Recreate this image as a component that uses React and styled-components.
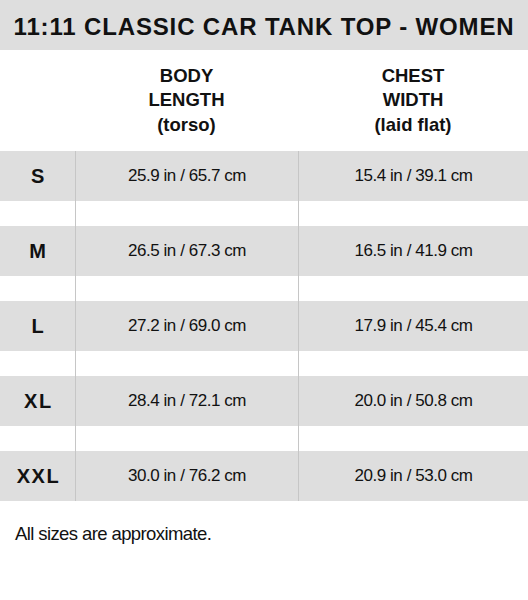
import React from "react";
import styled, { createGlobalStyle } from "styled-components";

const Global = createGlobalStyle`
  html, body { margin: 0; padding: 0; background: #ffffff; }
  body { font-family: "Liberation Sans", Arial, sans-serif; color: #111; }
`;

const Page = styled.div`
  width: 528px;
  display: flex;
  flex-direction: column;
`;

const TitleBar = styled.div`
  height: 50px;
  background: #dedede;
  display: flex;
  align-items: center;
  justify-content: center;
  font-weight: 700;
  font-size: 24px;
  letter-spacing: 0.85px;
  color: #111;
  padding-top: 3px;
  box-sizing: border-box;
`;

const Grid = styled.div`
  display: grid;
  grid-template-columns: 75px 223px 1fr;
`;

const HeadCell = styled.div`
  height: 101px;
  display: flex;
  align-items: center;
  justify-content: center;
  text-align: center;
  font-weight: 700;
  font-size: 18.5px;
  line-height: 24.5px;
  color: #111;
  box-sizing: border-box;
`;

const Cell = styled.div`
  height: ${(p) => (p.$gap ? 25 : 50)}px;
  background: ${(p) => (p.$gap ? "#ffffff" : "#dedede")};
  border-left: ${(p) => (p.$first ? "none" : "1px solid #c6c6c6")};
  box-sizing: border-box;
  display: flex;
  align-items: center;
  justify-content: center;
  font-size: ${(p) => (p.$first ? "20px" : "17px")};
  font-weight: ${(p) => (p.$first ? 700 : 400)};
  letter-spacing: ${(p) => (p.$first ? "1.6px" : "-0.45px")};
  padding-left: ${(p) => (p.$first ? "2px" : "0")};
  color: #111;
`;

const Footer = styled.div`
  padding: 22px 0 0 15px;
  font-size: 18.5px;
  letter-spacing: -0.6px;
  color: #111;
`;

const rows = [
  ["S", "25.9 in / 65.7 cm", "15.4 in / 39.1 cm"],
  ["M", "26.5 in / 67.3 cm", "16.5 in / 41.9 cm"],
  ["L", "27.2 in / 69.0 cm", "17.9 in / 45.4 cm"],
  ["XL", "28.4 in / 72.1 cm", "20.0 in / 50.8 cm"],
  ["XXL", "30.0 in / 76.2 cm", "20.9 in / 53.0 cm"],
];

export default function App() {
  return (
    <Page>
      <Global />
      <TitleBar>11:11 CLASSIC CAR TANK TOP - WOMEN</TitleBar>
      <Grid>
        <HeadCell />
        <HeadCell>
          BODY
          <br />
          LENGTH
          <br />
          (torso)
        </HeadCell>
        <HeadCell>
          CHEST
          <br />
          WIDTH
          <br />
          (laid flat)
        </HeadCell>
        {rows.map((r, i) => (
          <React.Fragment key={r[0]}>
            <Cell $first>{r[0]}</Cell>
            <Cell>{r[1]}</Cell>
            <Cell>{r[2]}</Cell>
            {i < rows.length - 1 && (
              <>
                <Cell $first $gap />
                <Cell $gap />
                <Cell $gap />
              </>
            )}
          </React.Fragment>
        ))}
      </Grid>
      <Footer>All sizes are approximate.</Footer>
    </Page>
  );
}
